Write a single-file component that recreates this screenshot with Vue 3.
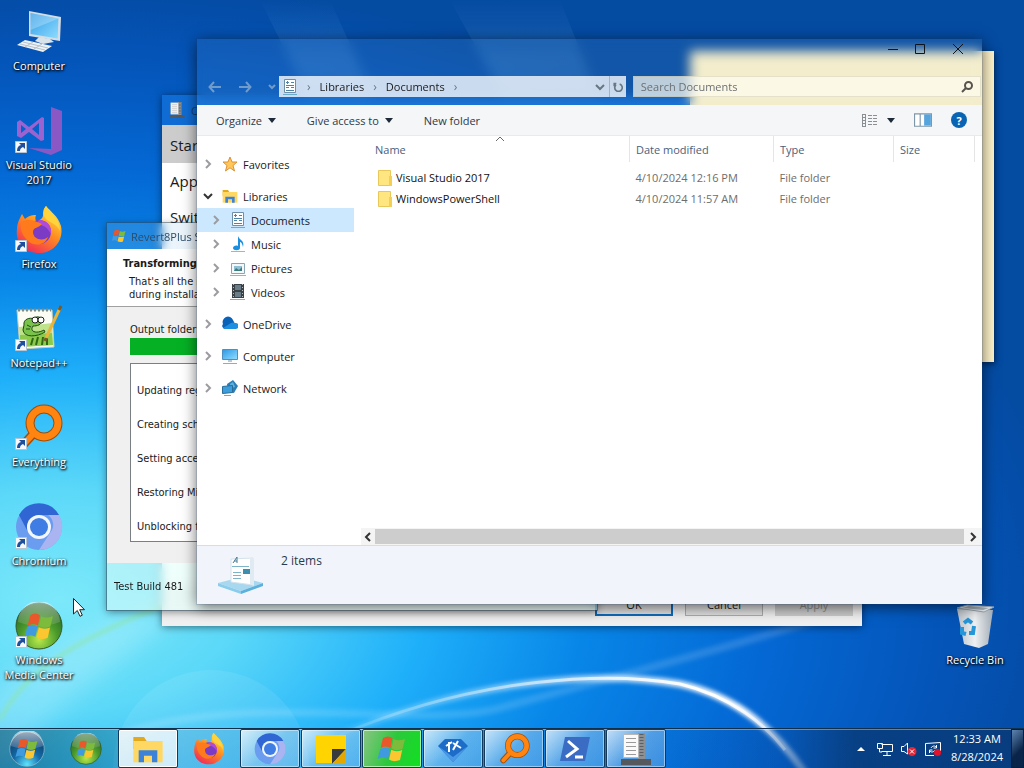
<script setup>
import { ref } from 'vue';

const shortcuts = [
  { name: 'Computer', icon: 'computer', link: false },
  { name: 'Visual Studio 2017', icon: 'vs', link: true },
  { name: 'Firefox', icon: 'firefox', link: true },
  { name: 'Notepad++', icon: 'notepad', link: true },
  { name: 'Everything', icon: 'everything', link: true },
  { name: 'Chromium', icon: 'chromium', link: true },
  { name: 'Windows Media Center', icon: 'wmc', link: true },
];

const tree = [
  { name: 'Favorites', icon: 'star', children: [] },
  {
    name: 'Libraries',
    icon: 'folder',
    open: true,
    children: [
      { name: 'Documents', icon: 'document' },
      { name: 'Music', icon: 'music' },
      { name: 'Pictures', icon: 'picture' },
      { name: 'Videos', icon: 'video' },
    ],
  },
  { name: 'OneDrive', icon: 'cloud', children: [] },
  { name: 'Computer', icon: 'monitor', children: [] },
  { name: 'Network', icon: 'network', children: [] },
];

const files = [
  { name: 'Visual Studio 2017', date: '4/10/2024 12:16 PM', type: 'File folder' },
  { name: 'WindowsPowerShell', date: '4/10/2024 11:57 AM', type: 'File folder' },
];

const tasks = [
  { name: 'File Explorer', icon: 'folder', state: 'active' },
  { name: 'Firefox', icon: 'firefox', state: 'pinned' },
  { name: 'Chromium', icon: 'chromium', state: 'open' },
  { name: 'Sticky Notes', icon: 'sticky', state: 'open' },
  { name: 'Setup', icon: 'flag', state: 'progress' },
  { name: 'Tweaker', icon: 'gem', state: 'open' },
  { name: 'Everything', icon: 'everything', state: 'open' },
  { name: 'PowerShell', icon: 'powershell', state: 'open' },
  { name: 'Properties', icon: 'server', state: 'open' },
];

const log = ['Updating reg', 'Creating sche', 'Setting acce', 'Restoring Mi', 'Unblocking fil'];

const selected = ref('Documents');
const query = ref('');
</script>

<template>
  <!-- shared icon shapes -->
  <svg class="sprite" aria-hidden="true">
    <defs>
      <linearGradient id="g-screen" x1="0" y1="0" x2="1" y2="1">
        <stop offset="0" stop-color="#2f9be6" />
        <stop offset="1" stop-color="#8fdcff" />
      </linearGradient>
      <linearGradient id="g-fox" x1="0.8" y1="0" x2="0.2" y2="1">
        <stop offset="0" stop-color="#ffe94a" />
        <stop offset="0.45" stop-color="#ff8f1f" />
        <stop offset="1" stop-color="#f0245c" />
      </linearGradient>
      <radialGradient id="g-green" cx="0.5" cy="0.8" r="0.8">
        <stop offset="0" stop-color="#b8e84a" />
        <stop offset="0.5" stop-color="#4c9c2c" />
        <stop offset="1" stop-color="#1f5a22" />
      </radialGradient>
      <radialGradient id="g-orb" cx="0.5" cy="0.95" r="0.9">
        <stop offset="0" stop-color="#5fe4ff" />
        <stop offset="0.45" stop-color="#146ba8" />
        <stop offset="1" stop-color="#0b3560" />
      </radialGradient>
      <linearGradient id="g-gloss" x1="0" y1="0" x2="0" y2="1">
        <stop offset="0" stop-color="#fff" stop-opacity="0.85" />
        <stop offset="1" stop-color="#fff" stop-opacity="0.15" />
      </linearGradient>
      <linearGradient id="g-bin" x1="0" y1="0" x2="1" y2="0">
        <stop offset="0" stop-color="#b9c2ca" />
        <stop offset="0.5" stop-color="#eef0f1" />
        <stop offset="1" stop-color="#a2acb6" />
      </linearGradient>
    </defs>

    <symbol id="i-flag" viewBox="0 0 32 32">
      <path fill="#e8582a" d="M7 5Q12 2 16.500 5L14.500 15Q10 12 4.500 15z" />
      <path fill="#7cbb3c" d="M17.500 6Q22 8.500 29 6L26.500 16Q20.500 18.500 15.500 15.600z" />
      <path fill="#3f9ae0" d="M4.200 16Q9.500 13.500 14.200 16L12 26Q7.500 23 1.500 26z" />
      <path fill="#fbc62f" d="M15.300 16.800Q20 19.500 26.200 17L24 27Q18 29.500 13 26.600z" />
    </symbol>

    <symbol id="i-computer" viewBox="0 0 48 48">
      <path fill="#d5dde4" d="M14 3L46 9L45 33L14 28z" />
      <path fill="url(#g-screen)" d="M15.500 5L43.500 10.500L42.700 30.500L15.500 26z" />
      <path fill="#fff" fill-opacity="0.25" d="M15.500 5L43.500 10.500L15.500 22z" />
      <path fill="#d8e2ea" d="M24 29L35 31L39 34L28 36L20 33z" />
      <path fill="#eef2f5" d="M10 32L37 38L28 44L2 37z" />
      <path stroke="#b5c2cc" fill="none" d="M8 34L33 40M5 36L30 42M18 34L10 39M27 36L19 41" />
    </symbol>

    <symbol id="i-vs" viewBox="0 0 48 48">
      <path fill="#8a58c4" d="M36 0L47 4V43L36 48L14 41L36 42z" />
      <path fill="#9a63cf" fill-rule="evenodd" d="M27 10L29 11V33L26 34L14 25L6 31L2 29V15L5 13L14 20zM6 18V26L11 22zM24 16L17 22L24 28z" />
    </symbol>

    <symbol id="i-firefox" viewBox="0 0 48 48">
      <path fill="url(#g-fox)" d="M31 0C35 5 43 10 46 20C49 35 38 47 24 47C10 47 0 37 2 23C2 17 5 12 7 8L10 13C14 9 19 9 21 9C20 12 20 14 22 15C25 14 27 13 28 10C28 6 28 3 31 0z" />
      <circle cx="24" cy="26" r="12" fill="#7b3bc4" />
      <path fill="#b04ad8" d="M24 14C33 14 37 21 36 28C32 20 26 18 20 19z" />
      <path fill="#ff7a1c" d="M6 16C14 12 20 15 27 18C24 22 18 21 18 26C18 33 27 36 33 31C30 40 18 41 12 34C7 29 5 23 6 16z" />
      <path fill="#ffd33c" d="M31 0C36 8 45 12 45 25C41 16 32 17 29 10C29 6 29 3 31 0z" />
    </symbol>

    <symbol id="i-notepad" viewBox="0 0 48 48">
      <path fill="#fbfdf4" stroke="#c5ccb8" d="M2 5H37L39 42L5 44z" />
      <path stroke="#7c8a88" stroke-dasharray="2 2" stroke-width="3" d="M3 5H36" />
      <path fill="#bfe38a" d="M4 22L37 18L38 40L5 42z" />
      <path fill="#8cca4c" d="M5 30L37 28L38 40L5 42z" />
      <path stroke="#2c6a14" stroke-width="2" d="M16 40L18 33M21 40L23 32M27 40L28 32M32 40V33" />
      <path fill="#79c24a" stroke="#1d4a16" stroke-width="1" d="M9 20C8 14 15 12 19 14C20 11 26 11 27 15C27 20 22 21 18 21C14 27 22 29 29 25L30 27C22 32 9 33 8 25z" />
      <path stroke="#1d4a16" d="M12 20L16 22M11 24L15 24" />
      <circle cx="20" cy="15" r="3" fill="#fff" stroke="#222" />
      <circle cx="26" cy="15" r="3" fill="#fff" stroke="#222" />
      <path stroke="#e8b43c" stroke-width="3" d="M45 3L31 33" />
      <path stroke="#7a5a26" stroke-width="3" d="M46 1L44 5M31 33L30 36" />
    </symbol>

    <symbol id="i-everything" viewBox="0 0 48 48">
      <path stroke="#a04c06" stroke-width="9" stroke-linecap="round" d="M19 29L8 41" />
      <circle cx="29" cy="19" r="14" fill="none" stroke="#a04c06" stroke-width="9" />
      <path stroke="#ff8410" stroke-width="6" stroke-linecap="round" d="M19 29L8 41" />
      <circle cx="29" cy="19" r="14" fill="none" stroke="#ff8410" stroke-width="7" />
    </symbol>

    <symbol id="i-chromium" viewBox="0 0 48 48">
      <circle cx="24" cy="24" r="23" fill="#6a9cf0" />
      <path fill="#2f66d4" d="M4 12A23 23 0 0 1 44 12H24A12 12 0 0 0 13 29z" />
      <path fill="#a9b4f0" d="M44 12A23 23 0 0 1 24 47L35 30A12 12 0 0 0 33 12z" />
      <circle cx="24" cy="24" r="12" fill="#f2f7ff" />
      <circle cx="24" cy="24" r="9" fill="#3f7ce4" />
    </symbol>

    <symbol id="i-wmc" viewBox="0 0 48 48">
      <circle cx="24" cy="24" r="23" fill="url(#g-green)" stroke="#33592a" />
      <path fill="url(#g-gloss)" fill-opacity="0.6" d="M3 20A21 21 0 0 1 45 20Q24 28 3 20z" />
      <use href="#i-flag" x="8" y="8" width="33" height="33" />
    </symbol>

    <symbol id="i-orb" viewBox="0 0 48 48">
      <circle cx="24" cy="24" r="23" fill="url(#g-orb)" stroke="#8fb8cc" />
      <path fill="url(#g-gloss)" fill-opacity="0.8" d="M2 20A22 22 0 0 1 46 20Q24 28 2 20z" />
      <use href="#i-flag" x="7" y="7" width="34" height="34" />
    </symbol>

    <symbol id="i-bin" viewBox="0 0 48 48">
      <path fill="url(#g-bin)" d="M6 7L42 8L37 42L28 46L13 42z" />
      <path fill="#e4e9ec" stroke="#98a5b0" d="M6 6L16 3L43 5L33 10z" />
      <path fill="#a3afb9" d="M11 6L18 4L38 6L32 8z" />
      <path fill="none" stroke="#2596d8" stroke-width="4" d="M13 21L17 18L21 21M23 24L22 31L18 31M11 25L11 31L15 32" />
    </symbol>

    <symbol id="i-folder" viewBox="0 0 24 24">
      <path fill="#e2a81e" d="M1 3H9L11 6H21V12H1z" />
      <path fill="#ffd863" d="M1 6H23V22H1z" />
      <path fill="#3c82d8" d="M5 13H19V22H15V17H9V22H5z" />
    </symbol>

    <symbol id="i-star" viewBox="0 0 16 16">
      <path fill="#ffc75a" stroke="#dc9034" d="M8 1L10 6L15 6L11 9.500L12.500 15L8 11.800L3.500 15L5 9.500L1 6L6 6z" />
    </symbol>

    <symbol id="i-document" viewBox="0 0 16 16">
      <path fill="#fff" stroke="#6f8fa6" d="M2.500 0.500H13.500V13.500H2.500z" />
      <path stroke="#4d84a8" d="M4 3.500H7M4 6.500H12M4 8.500H7M9 8.500H12M4 11.500H12M9 3.500H12M5.500 2V5" />
      <path stroke="#6aaccc" d="M1 15.500H15" />
    </symbol>

    <symbol id="i-music" viewBox="0 0 16 16">
      <path fill="#1b8fe0" d="M8 0C9 4 15 4 13 11C12 7 11 6 10 6V12C10 15 3 15 3 12C3 10 6 9 8 10z" />
      <path stroke="#7cc0e4" d="M1 15.500H15" />
    </symbol>

    <symbol id="i-picture" viewBox="0 0 16 16">
      <path fill="#f4f8fa" stroke="#8aa6b4" d="M1.500 3.500H14.500V13.500H1.500z" />
      <path fill="#8fc0d4" d="M4 6H12V11H4z" />
      <path fill="#3f7b78" d="M4 11L6 8L9 10L12 7V11z" />
      <path stroke="#8cb8cc" d="M0 15.500H16" />
    </symbol>

    <symbol id="i-video" viewBox="0 0 16 16">
      <path fill="#3a4248" d="M2 0H14V14H2z" />
      <path fill="#6a7c88" d="M5 1H11V6H5zM5 8H11V13H5z" />
      <path stroke="#b6bdc0" stroke-dasharray="1 2" d="M3.500 0V14M12.500 0V14" />
      <path stroke="#7cb0cc" d="M0 15.500H15" />
    </symbol>

    <symbol id="i-cloud" viewBox="0 0 16 16">
      <path fill="#0b63b8" d="M1 8A5 5 0 0 1 11 4L13 8L5 13H3A3 3 0 0 1 1 8z" />
      <path fill="#1e8fe0" d="M1 12L9 7A4 4 0 0 1 13 7A3 3 0 0 1 14 13H3z" />
    </symbol>

    <symbol id="i-monitor" viewBox="0 0 16 16">
      <path fill="#e8f2f8" stroke="#4f8fc0" d="M0.500 1.500H15.500V11.500H0.500z" />
      <path fill="url(#g-screen)" d="M1 2H15V11H1z" />
      <path stroke="#a8a2b4" d="M1 15.500H15" />
      <path stroke="#b8c8d4" stroke-width="2" d="M6 13H10" />
    </symbol>

    <symbol id="i-network" viewBox="0 0 16 16">
      <path fill="#2c7fb4" d="M5 4L11 0L16 6L12 13L6 12z" />
      <path fill="#5cb4e4" d="M8 4L11 2L13 7L9 8z" />
      <path fill="#3b9edc" stroke="#2a6c98" d="M0.500 6.500L10.500 5.500V12.500L0.500 13.500z" />
      <path stroke="#7aa6c0" d="M2 15.500H9" />
    </symbol>

    <symbol id="i-sticky" viewBox="0 0 32 32">
      <path fill="#ffd400" d="M1 2H31V18L20 30H1z" />
      <path fill="#3a3b3c" d="M17 16H31L17 31z" />
      <path fill="#e2a800" d="M17 31L31 16V31z" />
    </symbol>

    <symbol id="i-gem" viewBox="0 0 32 32">
      <path fill="#1c6cc8" d="M8 6H24L31 13L16 29L1 13z" />
      <path fill="#4a98e6" d="M1 13L16 29L31 13L16 24z" />
      <path stroke="#fff" stroke-width="2" fill="none" d="M9 13L15 9M12 9L12 19M16 17L21 8M16 10L24 15" />
    </symbol>

    <symbol id="i-powershell" viewBox="0 0 32 32">
      <path fill="#3a6cc4" d="M6 4H31L26 28H1z" />
      <path fill="none" stroke="#fff" stroke-width="3" d="M9 8L18 16L7 24M16 24H24" />
    </symbol>

    <symbol id="i-server" viewBox="0 0 32 32">
      <path fill="#8c9092" d="M18 0H25V26H18z" />
      <path stroke="#5c6062" stroke-dasharray="1 2" stroke-width="4" d="M21.500 1V25" />
      <path fill="#fafafa" stroke="#b8b8b8" d="M3.500 1.500H18.500V24.500H3.500z" />
      <path stroke="#9a9a9a" d="M6 5.500H16M6 9.500H16M6 13.500H16M6 17.500H16M6 21.500H16" />
      <path fill="#55585c" d="M1 26H31V32H1z" />
    </symbol>
  </svg>

  <div class="screen">
    <svg class="wallpaper" viewBox="0 0 1024 768" preserveAspectRatio="none" aria-hidden="true">
      <defs>
        <radialGradient id="w-base" gradientUnits="userSpaceOnUse" cx="0" cy="0" r="1" gradientTransform="translate(60 600) scale(1010 620)">
          <stop offset="0" stop-color="#7ce9fa" />
          <stop offset="0.18" stop-color="#5bd8f8" />
          <stop offset="0.36" stop-color="#1fb0fa" />
          <stop offset="0.52" stop-color="#0886e8" />
          <stop offset="0.7" stop-color="#0468d4" />
          <stop offset="0.88" stop-color="#0454b8" />
          <stop offset="1" stop-color="#044ba2" />
        </radialGradient>
        <linearGradient id="w-arc" x1="0" y1="0" x2="1" y2="0">
          <stop offset="0" stop-color="#fff" stop-opacity="0.1" />
          <stop offset="0.5" stop-color="#fff" stop-opacity="0.6" />
          <stop offset="0.85" stop-color="#fff" />
          <stop offset="1" stop-color="#fff" stop-opacity="0.4" />
        </linearGradient>
        <linearGradient id="w-beam" x1="0" y1="0" x2="0" y2="1">
          <stop offset="0" stop-color="#5a9fe0" stop-opacity="0" />
          <stop offset="0.3" stop-color="#5a9fe0" stop-opacity="0.25" />
          <stop offset="1" stop-color="#5a9fe0" stop-opacity="0" />
        </linearGradient>
        <filter id="w-soft" x="-20%" y="-20%" width="140%" height="140%">
          <feGaussianBlur stdDeviation="2" />
        </filter>
        <filter id="w-haze" x="-50%" y="-50%" width="200%" height="200%">
          <feGaussianBlur stdDeviation="12" />
        </filter>
      </defs>
      <rect width="1024" height="768" fill="url(#w-base)" />
      <path fill="url(#w-beam)" d="M260 0H330L420 200H360zM450 0H560L640 200H560z" />
      <circle cx="211" cy="768" r="98" fill="#fff" fill-opacity="0.08" />
      <path fill="#e8fbff" fill-opacity="0.25" d="M-20 700Q80 610 200 600Q80 680 -20 790z" filter="url(#w-haze)" />
      <path fill="none" stroke="#fff" stroke-opacity="0.14" stroke-width="8" d="M120 735C240 690 420 730 500 708S760 640 830 615" filter="url(#w-soft)" />
      <path fill="none" stroke="#8fe6a8" stroke-width="3" stroke-opacity="0.8" d="M0 720C20 680 60 645 165 605" filter="url(#w-soft)" />
      <path fill="none" stroke="url(#w-arc)" stroke-width="7" d="M340 735C480 675 610 672 680 684C740 697 780 735 810 780" filter="url(#w-soft)" />
      <path fill="none" stroke="url(#w-arc)" stroke-width="3" d="M340 735C480 675 610 672 680 684C730 696 765 724 785 750" />
    </svg>

    <main class="desktop">
      <ul class="shortcuts">
        <li v-for="s in shortcuts" :key="s.name">
          <a class="shortcut" href="#">
            <span class="shortcut-pic">
              <svg class="pic"><use :href="`#i-${s.icon}`" /></svg>
              <svg v-if="s.link" class="link-arrow" viewBox="0 0 12 12" aria-hidden="true">
                <path fill="#f6f8fb" stroke="#b8c4d0" d="M0.500 0.500H11.500V11.500H0.500z" />
                <path fill="#1f4f9c" d="M4 2H10V8L8 6Q5 7 5 10L2 10Q2 5 6 4z" />
              </svg>
            </span>
            <span>{{ s.name }}</span>
          </a>
        </li>
      </ul>

      <a class="shortcut bin" href="#">
        <span class="shortcut-pic">
          <svg class="pic"><use href="#i-bin" /></svg>
        </span>
        <span>Recycle Bin</span>
      </a>

      <section class="window props">
        <header class="props-title">
          <svg class="icon16"><use href="#i-server" /></svg>
          <span>Cl</span>
        </header>
        <ul class="props-list">
          <li class="current">Start</li>
          <li>App</li>
          <li>Switc</li>
        </ul>
        <footer class="props-actions">
          <button type="button" class="default">OK</button>
          <button type="button">Cancel</button>
          <button type="button" disabled>Apply</button>
        </footer>
      </section>

      <section class="window setup">
        <header class="setup-title">
          <svg class="icon16"><use href="#i-flag" /></svg>
          <span>Revert8Plus S</span>
        </header>
        <div class="setup-head">
          <h2>Transforming</h2>
          <p>That's all the in<br />during installat</p>
        </div>
        <div class="setup-body">
          <span>Output folder:</span>
          <div class="setup-progress" role="progressbar" aria-label="Installation" />
          <ul class="setup-log">
            <li v-for="line in log" :key="line">{{ line }}</li>
          </ul>
        </div>
        <footer class="setup-foot">Test Build 481</footer>
      </section>

      <aside class="note" aria-label="Sticky note" />

      <section class="window explorer">
        <header class="glass">
          <div class="caption">
            <button type="button" aria-label="Minimize">
              <svg viewBox="0 0 12 12"><path d="M1 6.500H11" /></svg>
            </button>
            <button type="button" aria-label="Maximize">
              <svg viewBox="0 0 12 12"><path d="M1.500 1.500H10.500V10.500H1.500z" /></svg>
            </button>
            <button type="button" class="close" aria-label="Close">
              <svg viewBox="0 0 12 12"><path d="M1 1L11 11M11 1L1 11" /></svg>
            </button>
          </div>
          <div class="navbar">
            <div class="history">
              <button type="button" aria-label="Back">
                <svg viewBox="0 0 14 12"><path d="M13 6H2M6 1L1.500 6L6 11" /></svg>
              </button>
              <button type="button" aria-label="Forward">
                <svg viewBox="0 0 14 12"><path d="M1 6H12M8 1L12.500 6L8 11" /></svg>
              </button>
              <button type="button" class="recent" aria-label="Recent locations">
                <svg viewBox="0 0 8 6"><path d="M1 1L4 4L7 1" /></svg>
              </button>
            </div>
            <nav class="address" aria-label="Address">
              <svg class="icon16"><use href="#i-document" /></svg>
              <span class="sep">›</span>
              <a href="#">Libraries</a>
              <span class="sep">›</span>
              <a href="#">Documents</a>
              <span class="sep">›</span>
              <button type="button" class="drop" aria-label="Previous locations">
                <svg viewBox="0 0 10 8"><path d="M1 2L5 6L9 2" /></svg>
              </button>
              <button type="button" class="reload" aria-label="Refresh">
                <svg viewBox="0 0 12 12"><path d="M4 2H1.500V5M8 2.500A4.500 4.500 0 1 1 3.500 3.500" /></svg>
              </button>
            </nav>
            <label class="search">
              <input v-model="query" type="text" placeholder="Search Documents" aria-label="Search Documents" />
              <svg viewBox="0 0 12 12"><circle cx="7.500" cy="4.500" r="3.500" /><path d="M5 7L1 11" /></svg>
            </label>
          </div>
        </header>

        <div class="toolbar">
          <button type="button">Organize <i class="caret" /></button>
          <button type="button">Give access to <i class="caret" /></button>
          <button type="button">New folder</button>
          <div class="view-tools">
            <button type="button" aria-label="Change view">
              <svg class="view-icon" viewBox="0 0 18 14">
                <path stroke="#8a8f94" d="M1 1.500H5M1 4.500H5M1 7.500H5M1 10.500H5M1 13.500H5M1.500 1V14M4.500 1V14" />
                <path stroke="#8a8f94" stroke-dasharray="4 1" d="M7 2.500H17M7 5.500H17M7 8.500H17M7 11.500H17" />
              </svg>
              <i class="caret" />
            </button>
            <button type="button" aria-label="Preview pane">
              <svg class="pane-icon" viewBox="0 0 16 12">
                <path fill="#fff" stroke="#7d96a8" d="M0.500 0.500H15.500V11.500H0.500zM5.500 1V11" />
                <path fill="#56a4dc" d="M9 1H15V11H9z" />
              </svg>
            </button>
            <button type="button" class="help" aria-label="Help">?</button>
          </div>
        </div>

        <div class="content">
          <ul class="tree">
            <li v-for="node in tree" :key="node.name" class="branch">
              <button type="button" class="node">
                <svg class="twisty" :class="{ open: node.open }" viewBox="0 0 10 10">
                  <path d="M3 1L7 5L3 9" />
                </svg>
                <svg class="icon16"><use :href="`#i-${node.icon}`" /></svg>
                {{ node.name }}
              </button>
              <ul v-if="node.children.length">
                <li v-for="child in node.children" :key="child.name">
                  <button
                    type="button"
                    class="node child"
                    :class="{ selected: selected === child.name }"
                    @click="selected = child.name"
                  >
                    <svg class="twisty" viewBox="0 0 10 10"><path d="M3 1L7 5L3 9" /></svg>
                    <svg class="icon16"><use :href="`#i-${child.icon}`" /></svg>
                    {{ child.name }}
                  </button>
                </li>
              </ul>
            </li>
          </ul>

          <div class="list">
            <table>
              <colgroup>
                <col />
                <col class="col-date" />
                <col class="col-type" />
                <col class="col-size" />
              </colgroup>
              <thead>
                <tr>
                  <th>
                    Name
                    <svg class="sorted" viewBox="0 0 10 6"><path d="M1 5L5 1L9 5" /></svg>
                  </th>
                  <th>Date modified</th>
                  <th>Type</th>
                  <th>Size</th>
                </tr>
              </thead>
              <tbody>
                <tr v-for="f in files" :key="f.name">
                  <td>
                    <span class="file">
                      <svg class="file-icon" viewBox="0 0 14 16">
                        <path fill="#ffe680" stroke="#e8c85a" d="M0.500 0.500H12.500V15.500H0.500z" />
                        <path fill="#f4cf55" d="M11 6H14V16H11z" />
                      </svg>
                      {{ f.name }}
                    </span>
                  </td>
                  <td>{{ f.date }}</td>
                  <td>{{ f.type }}</td>
                  <td />
                </tr>
              </tbody>
            </table>
            <div class="scrollbar">
              <button type="button" aria-label="Scroll left">
                <svg viewBox="0 0 8 10"><path d="M6 1L2 5L6 9" /></svg>
              </button>
              <div class="thumb" />
              <button type="button" aria-label="Scroll right">
                <svg viewBox="0 0 8 10"><path d="M2 1L6 5L2 9" /></svg>
              </button>
            </div>
          </div>
        </div>

        <footer class="status">
          <svg class="library" viewBox="0 0 48 40" aria-hidden="true">
            <path fill="#a8d8f0" d="M1 28L24 22L46 28L24 36z" />
            <path fill="#5cb0dc" d="M24 36L46 28V31L24 39z" />
            <path fill="#8accea" d="M1 28L24 36V39L1 31z" />
            <path fill="#fff" stroke="#d5e2ea" d="M14 4L36 3V30L14 27z" />
            <path fill="#dfeaf2" d="M33 3L37 5V31L33 29z" />
            <path fill="none" stroke="#4a7c98" d="M16 8L20 2V8M17 6H20" />
            <path stroke="#7db4c8" d="M15 11.500H32M16 17.500H24M16 20.500H24M16 23.500H24" />
            <path fill="#3d8fae" d="M26 14H33V19H26z" />
          </svg>
          <span>2 items</span>
        </footer>
      </section>

      <svg class="cursor" viewBox="0 0 12 19" aria-hidden="true">
        <path fill="#fff" stroke="#222" d="M0.500 0.500V16L4.300 12.500L7 18.300L9.300 17.200L6.700 11.700H11.500z" />
      </svg>
    </main>

    <footer class="taskbar">
      <button type="button" class="start" aria-label="Start">
        <svg><use href="#i-orb" /></svg>
      </button>
      <button type="button" class="media" aria-label="Windows Media Center">
        <svg><use href="#i-wmc" /></svg>
      </button>
      <div class="tasks">
        <button v-for="t in tasks" :key="t.name" type="button" class="task" :class="t.state" :aria-label="t.name">
          <svg><use :href="`#i-${t.icon}`" /></svg>
        </button>
      </div>
      <div class="tray">
        <svg class="tray-up" viewBox="0 0 8 4"><path fill="#fff" d="M0 4L4 0L8 4z" /></svg>
        <svg class="tray-icon" viewBox="0 0 16 14">
          <path d="M4.500 2.500H15.500V9.500H4.500M10 10V13M6 13.500H14M0.500 1.500H5.500V6.500H0.500zM2.500 7V10H5" />
        </svg>
        <svg class="tray-icon" viewBox="0 0 16 14">
          <path d="M0.500 4.500H3L6.500 1V12L3 9.500H0.500z" />
          <circle cx="11" cy="9.500" r="4.500" fill="#e02838" stroke="none" />
          <path d="M9 7.500L13 11.500M13 7.500L9 11.500" />
        </svg>
        <svg class="tray-icon" viewBox="0 0 16 14">
          <path d="M0.500 1.500L15.500 0.500V9M0.500 1.500V13.500H9M4.500 11V8H7.500M4.500 8.500C6 11 9 10 10 8M11.500 3V6H8.500M11.500 5.500C10 3 7 4 6 6" />
          <circle cx="12.500" cy="10.500" r="3.500" fill="#e0122c" stroke="none" />
        </svg>
        <time class="clock">12:33 AM<br />8/28/2024</time>
      </div>
      <button type="button" class="peek" aria-label="Show desktop" />
    </footer>
  </div>
</template>

<style>
body {
  margin: 0;
  overflow: hidden;
}
</style>

<style scoped>
.screen {
  position: relative;
  display: flex;
  flex-direction: column;
  height: 100vh;
  overflow: hidden;
  font: 11px/15px 'Open Sans', 'Noto Sans', sans-serif;
  color: #1a1a1a;
}

.sprite {
  position: absolute;
  width: 0;
  height: 0;
}

.wallpaper {
  position: absolute;
  inset: 0;
  width: 100%;
  height: 100%;
}

button,
input {
  margin: 0;
  padding: 0;
  border: 0;
  background: none;
  font: inherit;
  color: inherit;
}

ul {
  margin: 0;
  padding: 0;
  list-style: none;
}

a {
  color: inherit;
  text-decoration: none;
}

svg {
  flex: none;
}

.icon16 {
  width: 16px;
  height: 16px;
}

.desktop {
  position: relative;
  flex: 1;
  min-height: 0;
}

/* desktop shortcuts */
.shortcuts {
  display: flex;
  flex-direction: column;
  width: 78px;
}

.shortcuts li {
  height: 99px;
}

.shortcut {
  display: flex;
  flex-direction: column;
  align-items: center;
  gap: 2px;
  width: 78px;
  padding-top: 8px;
  text-align: center;
  color: #fff;
  text-shadow: 1px 1px 2px #000, 0 1px 3px #000;
}

.shortcut-pic {
  position: relative;
  display: flex;
}

.pic {
  width: 48px;
  height: 48px;
}

.link-arrow {
  position: absolute;
  left: 0;
  bottom: 2px;
  width: 12px;
  height: 12px;
}

.bin {
  position: absolute;
  right: 10px;
  bottom: 61px;
}

/* windows */
.window {
  position: absolute;
  display: flex;
  flex-direction: column;
}

.note {
  position: absolute;
  top: 51px;
  right: 30px;
  width: 304px;
  height: 311px;
  background: #fff3ca;
  box-shadow: 1px 2px 6px rgba(0, 0, 0, 0.5);
}

.props {
  top: 95px;
  bottom: 102px;
  left: 162px;
  right: 162px;
  background: #f0f0f0;
  box-shadow: 0 1px 8px rgba(0, 0, 0, 0.5);
}

.props-title {
  display: flex;
  align-items: center;
  gap: 6px;
  height: 30px;
  padding-left: 7px;
  background: #0f6cd4;
  color: #16406e;
}

.props-list {
  flex: 1;
  background: #fff;
  font-size: 15px;
  line-height: 36px;
}

.props-list li {
  padding-left: 8px;
}

.props-list .current {
  padding-top: 2px;
  background: #cccccc;
}

.props-actions {
  display: flex;
  justify-content: flex-end;
  gap: 12px;
  padding: 10px 9px;
}

.props-actions button {
  width: 78px;
  height: 23px;
  border: 1px solid #adadad;
  background: #e1e1e1;
}

.props-actions .default {
  border: 2px solid #0f6cbd;
}

.props-actions button:disabled {
  border-color: #ccc;
  background: #ccc;
  color: #8c8c8c;
}

.setup {
  top: 223px;
  bottom: 118px;
  left: 107px;
  width: 490px;
  box-shadow: 0 0 0 1px rgba(50, 80, 100, 0.5), 0 2px 8px rgba(0, 0, 0, 0.45);
  font-family: 'DejaVu Sans Condensed', 'DejaVu Sans', sans-serif;
  line-height: 13px;
}

.setup-title {
  display: flex;
  flex: none;
  align-items: center;
  gap: 4px;
  height: 26px;
  padding-left: 4px;
  background: rgba(150, 200, 230, 0.2);
  backdrop-filter: blur(5px);
  font: 11px/15px 'Open Sans', sans-serif;
  color: #2c4c6c;
}

.setup-head {
  padding: 8px 16px 5px;
  border-bottom: 1px solid #a0a0a0;
  background: #fff;
}

.setup-head h2 {
  margin: 0;
  font-size: 11px;
  line-height: 13px;
}

.setup-head p {
  margin: 5px 0 0 6px;
}

.setup-body {
  display: flex;
  flex: 1;
  flex-direction: column;
  min-height: 0;
  padding: 16px 23px 21px;
  background: #f0f0f0;
}

.setup-progress {
  height: 17px;
  margin: 2px 0 8px;
  background: #06b025;
}

.setup-log {
  flex: 1;
  min-height: 0;
  padding-top: 10px;
  border: 1px solid #7a7f84;
  background: #fff;
}

.setup-log li {
  padding-left: 6px;
  line-height: 34px;
}

.setup-foot {
  flex: none;
  height: 47px;
  padding-left: 7px;
  background: rgba(225, 255, 250, 0.55);
  backdrop-filter: blur(5px);
  line-height: 48px;
}

/* explorer */
.explorer {
  top: 39px;
  right: 42px;
  bottom: 124px;
  left: 197px;
  box-shadow: 0 0 0 1px rgba(20, 60, 120, 0.15), 0 3px 14px rgba(0, 0, 0, 0.6);
}

.glass {
  display: flex;
  flex-direction: column;
  justify-content: space-between;
  height: 66px;
  background: rgba(140, 190, 230, 0.1);
  backdrop-filter: blur(6px);
}

.caption {
  display: flex;
  justify-content: flex-end;
  gap: 15px;
  padding: 4px 18px 0 0;
}

.caption button {
  display: flex;
}

.caption svg {
  width: 12px;
  height: 12px;
  fill: none;
  stroke: #10151c;
}

.caption .close {
  margin-left: 11px;
}

.navbar {
  display: flex;
  align-items: center;
  gap: 7px;
  padding: 0 1px 8px 11px;
}

.history {
  display: flex;
  flex: none;
  align-items: center;
  gap: 16px;
  width: 64px;
}

.history button {
  display: flex;
}

.history svg {
  width: 14px;
  height: 12px;
  fill: none;
  stroke: #6f9ccb;
  stroke-width: 2;
}

.history .recent svg {
  width: 8px;
  height: 6px;
}

.address {
  display: flex;
  flex: 1 1 50%;
  align-items: center;
  gap: 9px;
  box-sizing: border-box;
  height: 21px;
  padding-left: 3px;
  background: rgba(255, 255, 255, 0.78);
}

.sep {
  color: #6c7884;
  font-size: 12px;
  line-height: 12px;
}

.address svg:not(.icon16) {
  width: 10px;
  height: 10px;
  fill: none;
  stroke: #687684;
  stroke-width: 2;
}

.address .drop {
  margin-left: auto;
}

.address button {
  display: flex;
}

.address .reload {
  align-items: center;
  height: 21px;
  margin-left: -5px;
  padding: 0 3px;
  border-left: 1px solid #9cb6d0;
}

.search {
  display: flex;
  flex: 1 1 50%;
  align-items: center;
  box-sizing: border-box;
  height: 21px;
  padding: 0 7px;
  border: 1px solid rgba(190, 180, 150, 0.35);
  background: rgba(255, 252, 240, 0.72);
}

.search input {
  flex: 1;
  min-width: 0;
  outline: 0;
}

.search input::placeholder {
  color: #6d7074;
  opacity: 1;
}

.search svg {
  width: 12px;
  height: 12px;
  fill: none;
  stroke: #57544c;
  stroke-width: 2;
}

.toolbar {
  display: flex;
  align-items: center;
  gap: 31px;
  height: 30px;
  padding: 0 15px 0 19px;
  border-bottom: 1px solid #e8eaec;
  background: #f5f6f7;
  color: #2c3a4a;
}

.caret {
  display: inline-block;
  margin-left: 3px;
  border: 4px solid transparent;
  border-top: 5px solid #1e2a38;
  border-bottom: 0;
  vertical-align: 2px;
}

.view-tools {
  display: flex;
  align-items: center;
  gap: 19px;
  margin-left: auto;
}

.view-tools button {
  display: flex;
  align-items: center;
  gap: 5px;
}

.view-icon,
.pane-icon {
  width: 18px;
  height: 14px;
}

.view-tools .help {
  justify-content: center;
  width: 16px;
  height: 16px;
  border-radius: 50%;
  background: #0a64b4;
  color: #fff;
  font-weight: 700;
}

.content {
  display: flex;
  flex: 1;
  min-height: 0;
  background: #fff;
}

.tree {
  display: flex;
  flex-direction: column;
  gap: 8px;
  width: 157px;
  margin-right: 7px;
  padding-top: 16px;
}

.node {
  display: flex;
  align-items: center;
  gap: 5px;
  width: 100%;
  height: 24px;
  padding-left: 6px;
}

.node .icon16 {
  margin-left: 4px;
}

.child {
  padding-left: 14px;
}

.selected {
  background: #cce8ff;
}

.twisty {
  width: 10px;
  height: 10px;
  fill: none;
  stroke: #9c9ca0;
  stroke-width: 2;
}

.twisty.open {
  transform: rotate(90deg);
  stroke: #333;
}

.list {
  display: flex;
  flex: 1;
  flex-direction: column;
  justify-content: space-between;
  min-width: 0;
}

table {
  margin-right: 7px;
  border-collapse: collapse;
  table-layout: fixed;
}

.col-date {
  width: 144px;
}

.col-type {
  width: 120px;
}

.col-size {
  width: 81px;
}

th,
td {
  height: 21px;
  padding: 0 0 0 6px;
  text-align: left;
  font-weight: 400;
  white-space: nowrap;
  color: #6d6d6d;
}

th:first-child,
td:first-child {
  padding-left: 14px;
}

th {
  position: relative;
  height: 26px;
  border-right: 1px solid #e5e5e5;
  color: #4c607a;
}

tbody tr:first-child td {
  padding-top: 5px;
}

.sorted {
  position: absolute;
  top: 0;
  left: 50%;
  width: 10px;
  height: 6px;
  fill: none;
  stroke: #6a6a6a;
}

.file {
  display: flex;
  align-items: center;
  gap: 4px;
  padding-left: 3px;
  color: #111;
}

.file-icon {
  width: 14px;
  height: 16px;
}

.scrollbar {
  display: flex;
  align-items: center;
  height: 17px;
  background: #f4f4f4;
}

.scrollbar button {
  display: flex;
  justify-content: center;
  width: 14px;
}

.scrollbar button:last-child {
  width: 18px;
}

.scrollbar svg {
  width: 8px;
  height: 10px;
  fill: none;
  stroke: #333;
  stroke-width: 2;
}

.thumb {
  flex: 1;
  height: 15px;
  background: #cdcdcd;
}

.status {
  display: flex;
  align-items: center;
  gap: 16px;
  height: 58px;
  padding-left: 20px;
  border-top: 1px solid #d9dde3;
  background: #f1f5fb;
  color: #2c3a4c;
  font-size: 12px;
}

.status span {
  padding-bottom: 30px;
}

.library {
  width: 48px;
  height: 40px;
}

.cursor {
  position: absolute;
  top: 598px;
  left: 73px;
  width: 12px;
  height: 19px;
}

/* taskbar */
.taskbar {
  position: relative;
  display: flex;
  align-items: stretch;
  box-sizing: border-box;
  height: 40px;
  border-top: 1px solid #12304c;
  background: linear-gradient(
    90deg,
    rgba(10, 80, 110, 0.6) 0,
    rgba(20, 110, 140, 0.45) 110px,
    rgba(120, 170, 200, 0.3) 180px,
    rgba(20, 110, 200, 0.1) 660px,
    rgba(10, 50, 110, 0.2) calc(100% - 240px),
    rgba(10, 50, 100, 0.65) calc(100% - 170px),
    rgba(10, 50, 100, 0.6) 100%
  );
  box-shadow: inset 0 1px rgba(255, 255, 255, 0.35);
}

.start,
.media {
  display: flex;
  align-items: center;
  justify-content: center;
  width: 54px;
}

.start svg {
  width: 36px;
  height: 36px;
}

.media {
  width: 64px;
}

.media svg {
  width: 32px;
  height: 32px;
}

.tasks {
  display: flex;
  gap: 1px;
}

.task {
  display: flex;
  align-items: center;
  justify-content: center;
  box-sizing: border-box;
  width: 60px;
  border: 1px solid transparent;
  border-radius: 2px;
}

.task svg {
  width: 32px;
  height: 32px;
}

.task.open {
  border-color: #123a5c;
  background: linear-gradient(135deg, rgba(255, 255, 255, 0.75), rgba(190, 220, 245, 0.4) 50%, rgba(150, 200, 240, 0.35));
  box-shadow: inset 0 0 0 1px rgba(255, 255, 255, 0.45);
}

.task.active {
  border-color: #123a5c;
  background: linear-gradient(135deg, rgba(255, 255, 255, 0.85), rgba(235, 248, 255, 0.8));
  box-shadow: inset 0 0 0 1px #fff;
}

.task.progress {
  border-color: #123a5c;
  background: linear-gradient(110deg, #8cc486, #2cc83c 50%, #10e020);
  box-shadow: inset 0 0 0 1px rgba(220, 255, 220, 0.7);
}

.tray {
  display: flex;
  align-items: center;
  gap: 8px;
  margin-left: auto;
  padding-right: 8px;
  color: #fff;
}

.tray-up {
  width: 8px;
  height: 4px;
  margin-right: 4px;
}

.tray-icon {
  width: 16px;
  height: 14px;
  fill: none;
  stroke: #fff;
}

.clock {
  margin-left: 2px;
  padding-bottom: 2px;
  text-align: center;
  line-height: 18px;
}

.peek {
  width: 13px;
  border: 1px solid #0a1e38;
  background: linear-gradient(135deg, rgba(150, 180, 210, 0.6), rgba(10, 30, 60, 0.8) 60%);
}
</style>
